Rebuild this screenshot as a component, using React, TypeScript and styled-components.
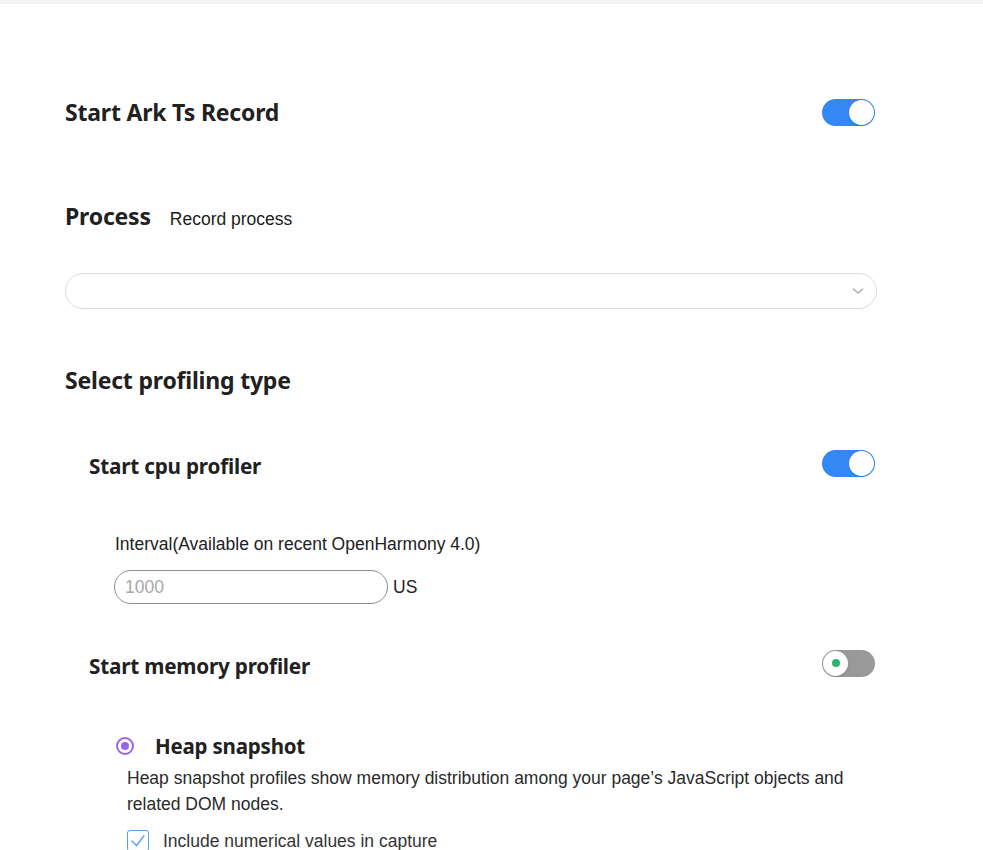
import React, { useState } from 'react'
import styled, { createGlobalStyle } from 'styled-components'

const GlobalStyle = createGlobalStyle`
  html, body {
    margin: 0;
    padding: 0;
    background: #ffffff;
  }
  body {
    font-family: "Liberation Sans", Arial, sans-serif;
    color: #212121;
  }
`

const TopBar = styled.div`
  height: 4px;
  background: #f3f3f3;
`

const Page = styled.div`
  padding: 0 106px 0 65px;
  display: flex;
  flex-direction: column;
`

const Row = styled.div<{ $h: number; $indent?: number }>`
  display: flex;
  align-items: center;
  justify-content: space-between;
  height: ${(p) => p.$h}px;
  padding-left: ${(p) => p.$indent ?? 0}px;
  padding-right: 2px;
`

const Title = styled.div<{ $size?: number }>`
  font-family: "Noto Sans", "Open Sans", sans-serif;
  font-weight: 700;
  font-size: ${(p) => p.$size ?? 23}px;
  color: #212121;
  letter-spacing: -0.2px;
`

const Inline = styled.div`
  display: flex;
  align-items: baseline;
  gap: 19px;
`

const Note = styled.span`
  font-size: 17.5px;
  color: #212121;
`

const Track = styled.button<{ $on: boolean; $lift?: number }>`
  position: relative;
  width: 53px;
  height: 27px;
  border-radius: 14px;
  border: none;
  padding: 0;
  cursor: pointer;
  margin-bottom: ${(p) => (p.$lift ?? 0) * 2}px;
  background: ${(p) => (p.$on ? '#3388f5' : '#999999')};
`

const Knob = styled.span<{ $on: boolean }>`
  position: absolute;
  top: 1px;
  left: ${(p) => (p.$on ? '27px' : '1px')};
  width: 25px;
  height: 25px;
  border-radius: 50%;
  background: #ffffff;
  box-shadow: 0 1px 2px rgba(0, 0, 0, 0.15);
  display: flex;
  align-items: center;
  justify-content: center;
`

const Dot = styled.span`
  width: 8px;
  height: 8px;
  border-radius: 50%;
  background: #2fb36a;
`

const Toggle = ({ on, dot, lift }: { on: boolean; dot?: boolean; lift?: number }) => {
  const [v, setV] = useState(on)
  return (
    <Track $on={v} $lift={lift} onClick={() => setV(!v)}>
      <Knob $on={v}>{!v && dot ? <Dot /> : null}</Knob>
    </Track>
  )
}

const SelectBox = styled.div`
  height: 34px;
  border: 1px solid #dcdcdc;
  border-radius: 18px;
  display: flex;
  align-items: center;
  justify-content: flex-end;
  padding-right: 10px;
  color: #b5b5b5;
`

const Label = styled.div`
  font-size: 17.5px;
  color: #212121;
  padding-left: 50px;
  height: 22px;
  line-height: 22px;
`

const InputRow = styled.div`
  display: flex;
  align-items: center;
  gap: 5px;
  padding-left: 49px;
  margin-top: 15px;
`

const TextInput = styled.input`
  box-sizing: border-box;
  width: 274px;
  height: 34px;
  border: 1px solid #8f8f8f;
  border-radius: 17px;
  padding: 0 10px;
  font-family: "Liberation Sans", Arial, sans-serif;
  font-size: 17.5px;
  color: #212121;
  outline: none;
  &::placeholder {
    color: #a8a8a8;
  }
`

const Unit = styled.span`
  font-size: 17.5px;
  color: #212121;
`

const RadioRow = styled.div`
  display: flex;
  align-items: center;
  gap: 21px;
  padding-left: 51px;
  height: 30px;
`

const Radio = styled.span`
  width: 14px;
  height: 14px;
  border: 2px solid #9a64e8;
  border-radius: 50%;
  display: flex;
  align-items: center;
  justify-content: center;
  &::after {
    content: '';
    width: 8px;
    height: 8px;
    border-radius: 50%;
    background: #9a64e8;
  }
`

const Desc = styled.div`
  font-size: 17.5px;
  line-height: 26px;
  color: #2a2a2a;
  padding-left: 62px;
  margin-top: 4px;
`

const CheckRow = styled.label`
  display: flex;
  align-items: center;
  gap: 14px;
  padding-left: 62px;
  margin-top: 13px;
  font-size: 17.5px;
  color: #333333;
`

const CheckBox = styled.span`
  width: 20px;
  height: 20px;
  border: 1px solid #5a9de8;
  border-radius: 3px;
  display: flex;
  align-items: center;
  justify-content: center;
  background: #fff;
`

export default function App() {
  return (
    <>
      <GlobalStyle />
      <TopBar />
      <Page>
        <Row $h={80} style={{ marginTop: 68 }}>
          <Title>Start Ark Ts Record</Title>
          <Toggle on />
        </Row>
        <Row $h={40} style={{ marginTop: 44, justifyContent: 'flex-start' }}>
          <Inline>
            <Title>Process</Title>
            <Note>Record process</Note>
          </Inline>
        </Row>
        <SelectBox style={{ marginTop: 37 }}>
          <svg width="16" height="16" viewBox="0 0 24 24" fill="none" stroke="#aaaaaa" strokeWidth="2" strokeLinecap="round" strokeLinejoin="round">
            <polyline points="5 9 12 15 19 9" />
          </svg>
        </SelectBox>
        <Row $h={40} style={{ marginTop: 51 }}>
          <Title>Select profiling type</Title>
        </Row>
        <Row $h={40} $indent={24} style={{ marginTop: 46 }}>
          <Title $size={20.7}>Start cpu profiler</Title>
          <Toggle on lift={3} />
        </Row>
        <Label style={{ marginTop: 47 }}>Interval(Available on recent OpenHarmony 4.0)</Label>
        <InputRow>
          <TextInput placeholder="1000" />
          <Unit>US</Unit>
        </InputRow>
        <Row $h={40} $indent={24} style={{ marginTop: 42 }}>
          <Title $size={20.7}>Start memory profiler</Title>
          <Toggle on={false} dot lift={3} />
        </Row>
        <RadioRow style={{ marginTop: 45 }}>
          <Radio />
          <Title $size={20.5}>Heap snapshot</Title>
        </RadioRow>
        <Desc>
          Heap snapshot profiles show memory distribution among your page’s JavaScript objects and related DOM nodes.
        </Desc>
        <CheckRow>
          <CheckBox>
            <svg width="18" height="18" viewBox="0 0 24 24" fill="none" stroke="#5a9de8" strokeWidth="1.8" strokeLinecap="round" strokeLinejoin="round">
              <polyline points="4 12 10 18 20 5" />
            </svg>
          </CheckBox>
          Include numerical values in capture
        </CheckRow>
      </Page>
    </>
  )
}
